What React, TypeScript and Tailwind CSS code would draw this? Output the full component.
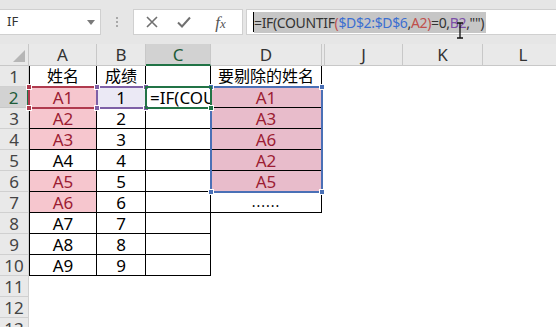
import type { ReactNode } from 'react';

const font = { fontFamily: "'Noto Sans', 'Noto Sans CJK SC', sans-serif" };

const GRID = 'grid grid-cols-[29px_68px_49px_65px_111px_3px_78px_80px_81px]';

const pinkA = 'bg-[#f6c6ce] text-[#9c1c33]';
const pinkD = 'bg-[#e8bccb] text-[#9c1c33]';

type Cell = { v?: ReactNode; cls?: string };

const colA: Cell[] = [
  { v: <span className="text-[16px]">姓名</span> },
  { v: 'A1', cls: pinkA },
  { v: 'A2', cls: pinkA },
  { v: 'A3', cls: pinkA },
  { v: 'A4' },
  { v: 'A5', cls: pinkA },
  { v: 'A6', cls: pinkA },
  { v: 'A7' },
  { v: 'A8' },
  { v: 'A9' },
];

const colD: Cell[] = [
  { v: <span className="text-[16px]">要剔除的姓名</span> },
  { v: 'A1', cls: pinkD },
  { v: 'A3', cls: pinkD },
  { v: 'A6', cls: pinkD },
  { v: 'A2', cls: pinkD },
  { v: 'A5', cls: pinkD },
  { v: <span className="tracking-[1px] text-[14px]">......</span> },
];

const Handle = ({ className }: { className: string }) => (
  <span className={`absolute h-[6px] w-[6px] border border-white ${className}`} />
);

const RefBox = ({ className, color }: { className: string; color: string }) => (
  <div className={`pointer-events-none absolute border-2 ${className}`}>
    <Handle className={`-left-[4px] -top-[4px] ${color}`} />
    <Handle className={`-right-[4px] -top-[4px] ${color}`} />
    <Handle className={`-left-[4px] -bottom-[4px] ${color}`} />
    <Handle className={`-right-[4px] -bottom-[4px] ${color}`} />
  </div>
);

function TopBar() {
  return (
    <div className="flex h-[44px] items-start bg-[#e6e6e6] pt-[9px]">
      <div className="flex h-[26px] w-[101px] items-center justify-between border border-l-0 border-[#d0d0d0] bg-white pl-[7px] pr-[5px]">
        <span className="text-[13px] text-[#333]">IF</span>
        <svg width="8" height="5" viewBox="0 0 8 5">
          <path d="M0 0h8L4 5z" fill="#7a7a7a" />
        </svg>
      </div>
      <div className="flex h-[26px] w-[32px] flex-col items-center justify-center gap-[2px]">
        <span className="h-[2px] w-[2px] bg-[#a8a8a8]" />
        <span className="h-[2px] w-[2px] bg-[#a8a8a8]" />
        <span className="h-[2px] w-[2px] bg-[#a8a8a8]" />
      </div>
      <div className="flex h-[26px] w-[110px] items-center border border-[#d0d0d0] bg-white">
        <span className="flex w-[36px] justify-center">
          <svg width="12" height="12" viewBox="0 0 12 12">
            <path d="M1 1l10 10M11 1L1 11" stroke="#707070" strokeWidth="1.6" />
          </svg>
        </span>
        <span className="flex w-[30px] justify-center">
          <svg width="14" height="12" viewBox="0 0 14 12">
            <path d="M1 6.5l4 4L13 1.5" stroke="#707070" strokeWidth="2" fill="none" />
          </svg>
        </span>
        <span
          className="flex w-[44px] items-baseline justify-center text-[17px] italic leading-none text-[#555]"
          style={{ fontFamily: "'Liberation Serif', serif" }}
        >
          f<span className="text-[13px]">x</span>
        </span>
      </div>
      <div className="relative ml-[3px] flex h-[26px] flex-1 items-center border border-r-0 border-[#d0d0d0] bg-white pl-[6px]">
        <span className="h-[20px] w-px bg-black" />
        <span className="flex h-[21px] items-center bg-[#c6c6c6] pr-[2px] text-[14px] tracking-[-0.35px] text-[#333]">
          =IF(COUNTIF<span className="text-[#c0504d]">(</span>
          <span className="text-[#3c6fd1]">$D$2:$D$6</span>,<span className="text-[#c0504d]">A2</span>
          <span className="text-[#c0504d]">)</span>=0,<span className="text-[#7c4fa8]">B2</span>,"")
        </span>
        <svg className="absolute left-[209px] top-[12px]" width="8" height="17" viewBox="0 0 8 17">
          <path d="M1 1h6M4 1v15M1 16h6" stroke="#111" strokeWidth="1.3" fill="none" />
        </svg>
      </div>
    </div>
  );
}

function HeaderRow() {
  const plain = 'flex items-center justify-center border-r border-b border-[#c8c8c8] bg-[#e9e9e9] text-[#333]';
  return (
    <>
      <div className="relative border-r border-b border-[#c8c8c8] bg-[#e9e9e9]">
        <svg className="absolute bottom-[3px] right-[3px]" width="12" height="12" viewBox="0 0 12 12">
          <path d="M12 0v12H0z" fill="#b6b6b6" />
        </svg>
      </div>
      <div className={plain}>A</div>
      <div className={plain}>B</div>
      <div className="flex items-center justify-center border-r border-b-2 border-r-[#c8c8c8] border-b-[#217346] bg-[#d2d2d2] text-[#1f5c3a]">
        C
      </div>
      <div className={plain}>D</div>
      <div className="border-r border-b border-[#c8c8c8] bg-[#e9e9e9]" />
      <div className={plain}>J</div>
      <div className={plain}>K</div>
      <div className={plain}>L</div>
    </>
  );
}

function Row({ r }: { r: number }) {
  const inTable = r <= 10;
  const a = colA[r - 1];
  const d = colD[r - 1];
  const sel = r === 2;
  const box = 'flex items-center justify-center border-b border-r border-black';
  return (
    <>
      <div
        className={
          sel
            ? 'flex items-center justify-center border-r-2 border-b border-r-[#217346] border-b-[#c8c8c8] bg-[#d2d2d2] text-[#1f5c3a]'
            : 'flex items-center justify-center border-r border-b border-[#d0d0d0] bg-[#e9e9e9] text-[#444]'
        }
      >
        {r}
      </div>
      {inTable ? (
        <>
          <div className={`${box} border-l ${a?.cls ?? ''}`}>{a?.v}</div>
          <div className={`${box} ${sel ? 'bg-[#ebe9f5]' : ''}`}>
            {r === 1 ? <span className="text-[16px]">成绩</span> : r - 1}
          </div>
          <div className={`${box} justify-start overflow-hidden whitespace-nowrap pl-[4px]`}>
            {sel ? '=IF(COUNTIF' : null}
          </div>
        </>
      ) : (
        <>
          <div />
          <div />
          <div />
        </>
      )}
      {d ? <div className={`${box} ${d.cls ?? ''}`}>{d.v}</div> : <div />}
      <div />
      <div />
      <div />
      <div />
    </>
  );
}

export default function App() {
  return (
    <div className="relative h-[327px] w-[556px] overflow-hidden bg-white" style={font}>
      <TopBar />
      <div className={`${GRID} grid-rows-[22px_repeat(13,21px)] text-[17px] leading-none`}>
        <HeaderRow />
        {Array.from({ length: 13 }, (_, i) => (
          <Row key={i} r={i + 1} />
        ))}
      </div>

      <RefBox className="left-[28px] top-[86px] h-[23px] w-[70px] border-[#b03a4e]" color="bg-[#b03a4e]" />
      <RefBox className="left-[96px] top-[86px] h-[23px] w-[51px] border-[#7e60a6]" color="bg-[#7e60a6]" />
      <RefBox className="left-[210px] top-[86px] h-[107px] w-[113px] border-[#4a70b6]" color="bg-[#4a70b6]" />
      <div className="pointer-events-none absolute left-[145px] top-[86px] h-[23px] w-[67px] border-2 border-[#217346]">
        <span className="absolute -bottom-[4px] -right-[4px] h-[6px] w-[6px] border border-white bg-[#217346]" />
      </div>
    </div>
  );
}
